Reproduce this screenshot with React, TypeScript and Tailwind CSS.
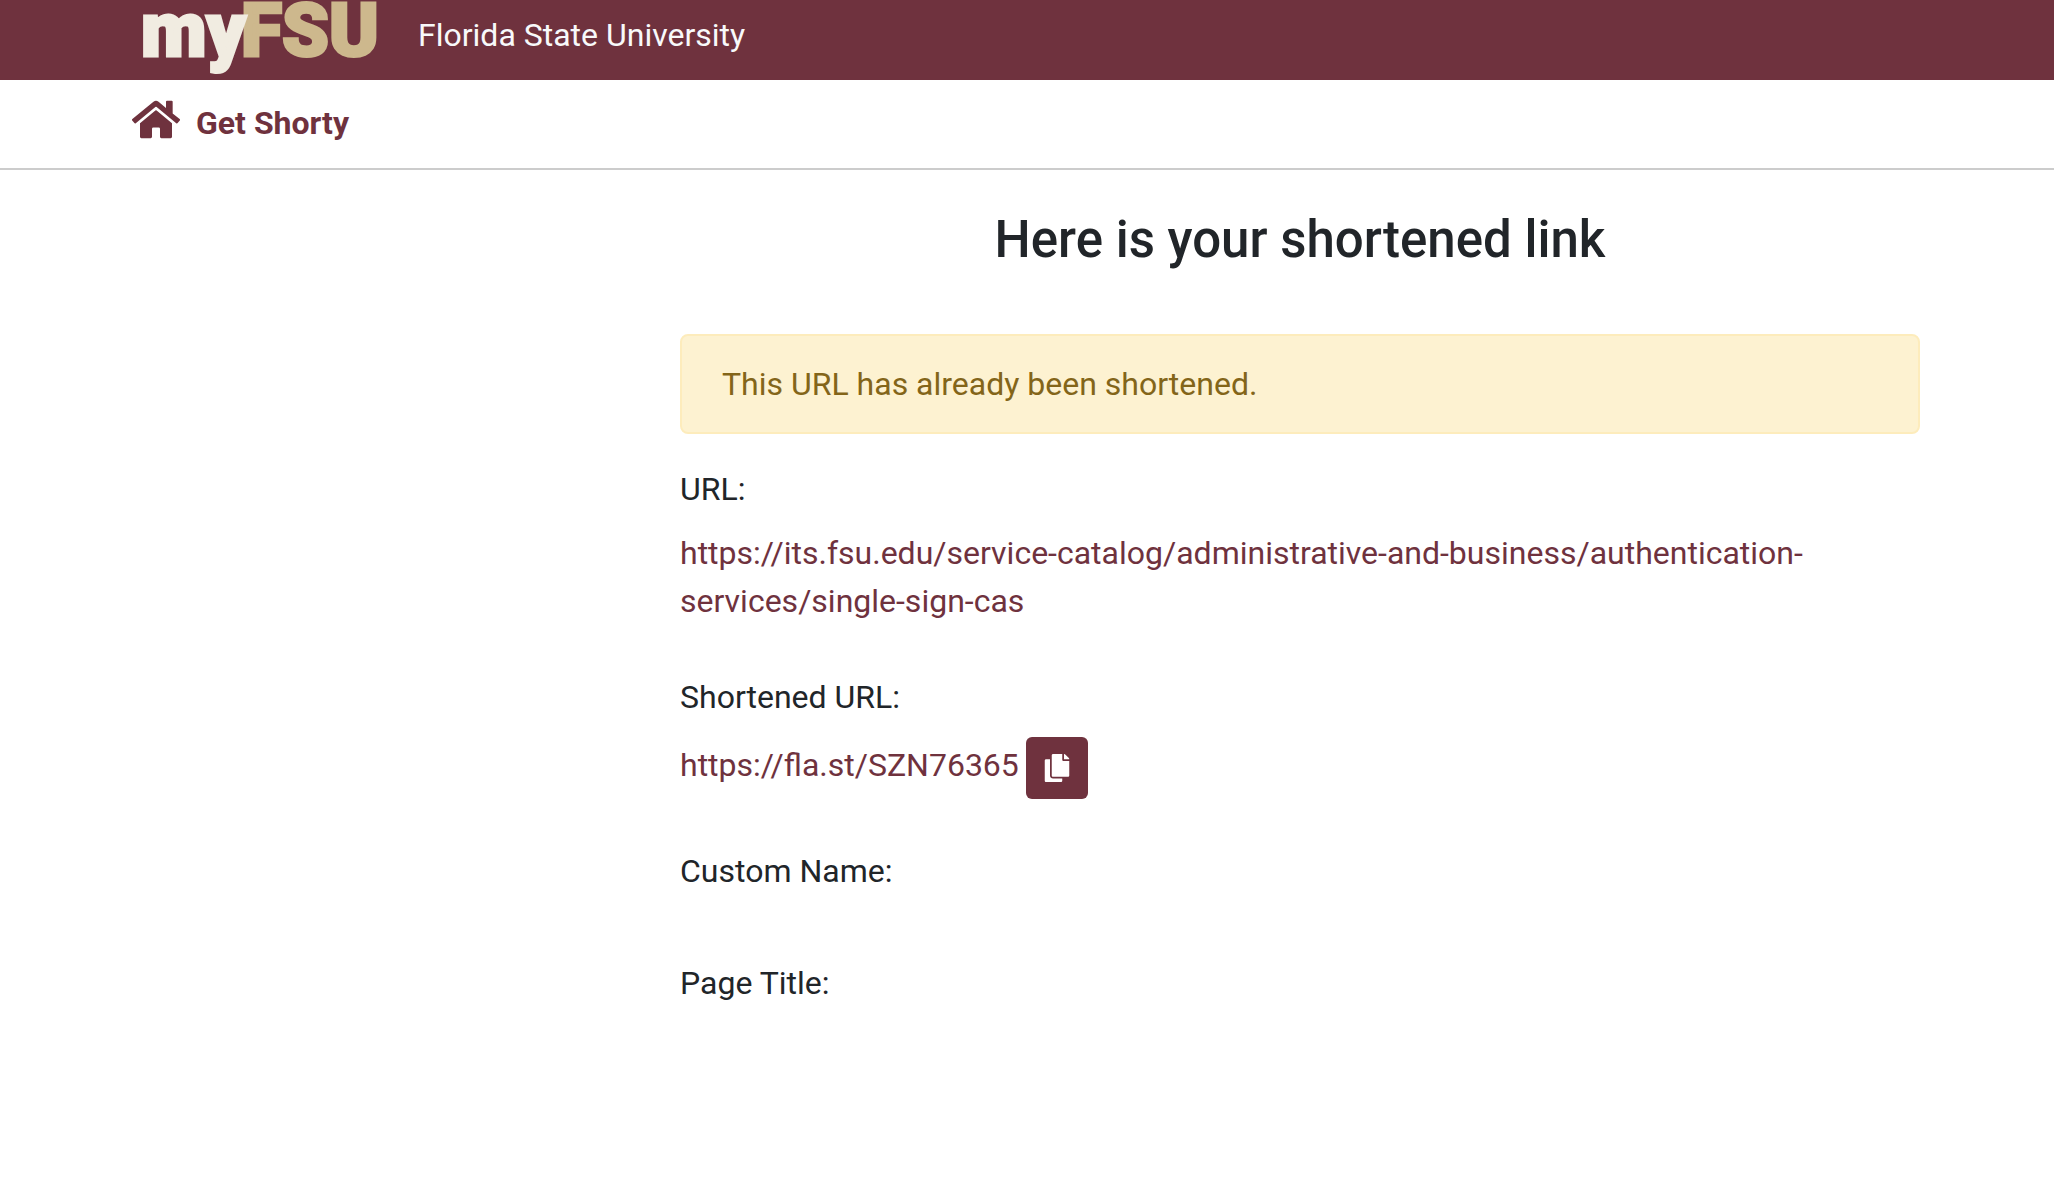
import React from 'react';
import { FaCopy, FaHome } from 'react-icons/fa';

const longUrl = 'https://its.fsu.edu/service-catalog/administrative-and-business/authentication-services/single-sign-cas';
const shortUrl = 'https://fla.st/SZN76365';

const Logo: React.FC = () => (
  <svg width="240" height="80" viewBox="0 0 240 80" role="img" aria-label="myFSU" className="block overflow-visible">
    <g fontFamily="Roboto, sans-serif" fontWeight="900" strokeWidth="3">
      <text x="101" y="56" fontSize="75" fill="#cdb88d" stroke="#cdb88d">FSU</text>
      <text x="1" y="56" fontSize="76" fill="#f1ece1" stroke="#f1ece1">my</text>
    </g>
  </svg>
);

const App: React.FC = () => {
  const handleCopy = () => {
    navigator.clipboard?.writeText(shortUrl);
  };

  return (
    <div className="min-h-screen bg-white font-[Roboto,sans-serif] text-[32px] leading-[48px] text-[#212529]">
      {/* Top bar */}
      <header className="flex h-20 items-start bg-[#6f323e] pl-[140px]">
        <a href="#" className="mr-[38px] shrink-0">
          <Logo />
        </a>
        <span className="pt-[11px] text-[#f8f9fa]">Florida State University</span>
      </header>

      {/* Navigation */}
      <nav className="h-[90px] border-b-2 border-[#cccccc] px-[132px] pt-[18px]">
        <a href="#" className="flex items-start gap-4 font-bold text-[#6f323e]">
          <FaHome className="h-[43px] w-12" />
          <span className="pt-px">Get Shorty</span>
        </a>
      </nav>

      <main className="px-[134px] pt-10 pb-12">
        <div className="ml-[546px]">
          <h1 className="text-center text-[51px] leading-[60px] font-medium">Here is your shortened link</h1>

          <div role="alert" className="mt-16 rounded-lg border-2 border-[#fdecbc] bg-[#fdf2d1] px-10 py-6 text-[#836519]">
            This URL has already been shortened.
          </div>

          <dl className="mt-[31px]">
            <dt>URL:</dt>
            <dd className="mt-4">
              <a href={longUrl} className="text-[#6f323e]">{longUrl}</a>
            </dd>

            <dt className="mt-12">Shortened URL:</dt>
            <dd className="mt-4 flex items-start gap-[7px]">
              <a href={shortUrl} className="pt-1 text-[#6f323e]">{shortUrl}</a>
              <button
                onClick={handleCopy}
                aria-label="Copy shortened URL"
                className="flex h-[62px] w-[62px] items-center justify-center rounded-md bg-[#6f323e] text-white"
              >
                <FaCopy size={28} />
              </button>
            </dd>

            <dt className="mt-12">Custom Name:</dt>
            <dt className="mt-16">Page Title:</dt>
          </dl>
        </div>
      </main>
    </div>
  );
};

export default App;
